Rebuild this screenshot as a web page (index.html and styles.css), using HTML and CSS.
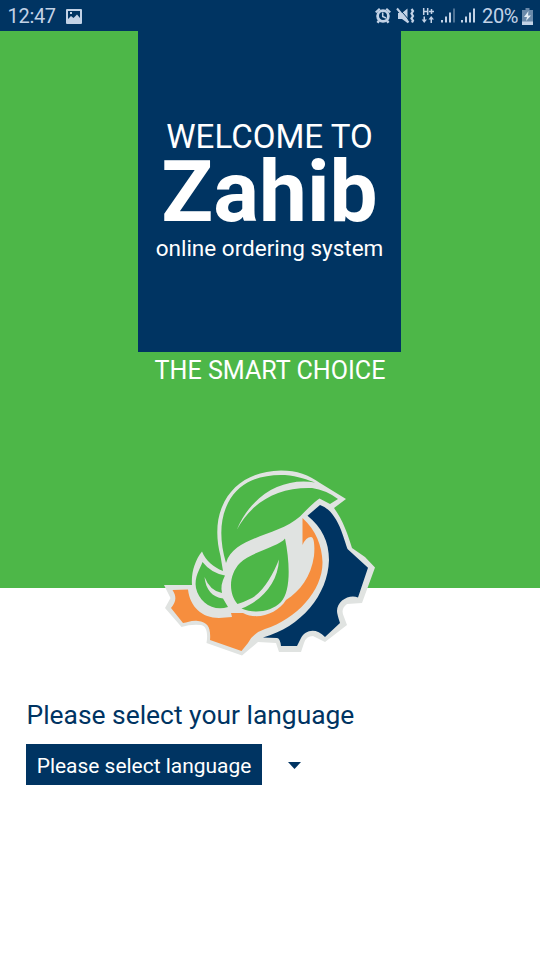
FILE: index.html
```
<!DOCTYPE html>
<html lang="en">
<head>
<meta charset="utf-8">
<title>Zahib</title>
<link rel="stylesheet" href="styles.css">
</head>
<body>
<header class="status">
  <span class="clock">12:47</span>
  <svg class="picture" width="16" height="15" viewBox="0 0 16 15"><path fill-rule="evenodd" d="M1 0H15Q16 0 16 1V14Q16 15 15 15H1Q0 15 0 14V1Q0 0 1 0ZM2 2V10L5 7L7.500 9L11 5.500L14 9V2ZM4 3H6V5H4Z"/></svg>
  <svg class="signals" width="103" height="18" viewBox="0 0 103 18">
    <circle cx="8" cy="9" r="5.400" fill="none" stroke="#c2d2e6" stroke-width="2.800"/>
    <path d="M0 4.700L4 1L5.500 2.500L1.500 6ZM16 4.700L12 1L10.500 2.500L14.500 6ZM3 13L5 14.500L3.500 16.500L1.500 15ZM13 13L11 14.500L12.500 16.500L14.500 15Z"/>
    <path d="M7.700 5.500V9.500L11 11" fill="none" stroke="#c2d2e6" stroke-width="1.500"/>
    <path d="M23 6H27L32.500 1.500V16L27 12H23Z"/>
    <path d="M24 1.500L34 13" stroke="#003462" stroke-width="1"/>
    <path d="M22 1.500L33.500 15.500" stroke="#c2d2e6" stroke-width="2"/>
    <path d="M36.500 2L38 4L36.500 6.500L38 9L36.500 11.500L38 13.500L37 15.500" fill="none" stroke="#c2d2e6" stroke-width="2.200"/>
    <path d="M48.700 1V8M52.700 1V8M48.700 4.500H52.700M54 4.500H59M56.500 2V7" fill="none" stroke="#c2d2e6" stroke-width="1.500"/>
    <path d="M48.500 9.500H50V12.500H52L49.200 16L46.700 12.500H48.500ZM55.500 16H57V12.500H59L56.200 9L53.500 12.500H55.500Z"/>
    <path d="M66 13H68V15.500H66ZM70 9.500H72V15.500H70ZM74 5.500H76V15.500H74ZM86 13H88V15.500H86ZM90 9.500H92V15.500H90ZM94 5.500H96V15.500H94ZM98 1.500H100V15.500H98Z"/>
    <path d="M78 1.500H80V15.500H78Z" opacity=".4"/>
  </svg>
  <span class="percent">20%</span>
  <svg class="battery" width="11" height="17" viewBox="0 0 11 17"><path d="M3.500 0H7.500V2H11V17H0V2H3.500Z" opacity=".55"/><path d="M0 13.500H11V17H0Z"/><path fill="#e4edf6" d="M6.500 3L2 9H5L4 13L9 7.500H6Z"/></svg>
</header>
<main>
  <section class="hero">
    <div class="panel">
      <p class="welcome">WELCOME TO</p>
      <h1>Zahib</h1>
      <p class="tagline">online ordering system</p>
    </div>
    <p class="slogan">THE SMART CHOICE</p>
    <svg class="logo" width="220" height="195" viewBox="160 465 220 195">
      <path fill="#e0e3e1" d="M164 585H192C191 573 195 560 202 551.500C206 561 213 567 223 571L220.500 556C216 539 216 521 222 507C231 485 252 471 281 470.500C297 470.500 309 475 320 483L346 499L334 508C343 520 348 535 352 548L365 557L375 567.500L362 603L347 604Q340 609 344 617L347 625L325 642L313 636Q306 636 304 643L301 652H279L276 643L258 642L242 655.500L206.500 643C208 634 207 626 201 625Q191 624 181.500 627L165 608L170.500 598Z"/>
      <path fill="#f68e3e" d="M302.500 518C316 530 322 546 322.500 562C323 590 297 619 265 629Q253 633 248 643L241.500 651L210 640C211 628 208 622 198 621C191 620 188 623 183 623L171 608C176 602 177 597 172.500 590L188 589.500C190 607 202 618 219 618L232 617L231 613H243C258 621 278 613 286 600C300 591 311 577 314 556C315 545 314 537 311 537Q306 537 302.500 545Z"/>
      <path fill="#003462" d="M307.500 515.700L320 505C329 508 336 517 341 530C344 538 346 545 347.500 549L368 567.700L358 597.500C349 594 337 601 337 611Q337 614 340 623L325 637C316 627 305 630 301 638L297 646H281Q280 638 277 638L263 637.500C301 627 328 595 329 560C329 542 322 527 307.500 515.700Z"/>
      <path fill="#4db748" d="M226 563C219 539 220 519 228 503C239 482 260 474 285 475C298 476 308 480 315 482.500C283 477 251 495 236.700 530C252 502 277 487 312 488Q326 490 338 499L330 504L319.500 498.500Q315 501 300 516.500C277 537 234 536 226 563Z"/>
      <path fill="#4db748" d="M285 538.500C280 546 251 552 240 563C229 574 228 593 237.500 604Q244 602 252 598C265 590 273 574 279 559.500C278 582 263 600 241.500 608.500C254 614 271 612 281 602C291 591 290 563 285 538.500Z"/>
      <path fill="#4db748" d="M202.500 562Q211 573 225 575.500Q220 585 222 593Q210 591 204.500 577C206 590 212 597 223 598.500L228 607C213 612 199 602 196 588C194 577 200 569 202.500 562Z"/>
    </svg>
  </section>
  <section class="language">
    <h2>Please select your language</h2>
    <div class="picker"><button>Please select language</button><svg width="13" height="7" viewBox="0 0 13 7"><path d="M0 0H13L6.500 7Z"/></svg></div>
  </section>
</main>
</body>
</html>
```
FILE: styles.css
```
* { box-sizing: border-box; }
body { margin: 0; height: 960px; background: #fff; font-family: Roboto, sans-serif; overflow: hidden; }
p, h1, h2 { margin: 0; font-weight: 400; white-space: nowrap; }
.status { height: 31px; background: #003462; color: #c2d2e6; fill: #c2d2e6; display: flex; align-items: center; padding: 1px 7px 0 7.5px; font-size: 20px; }
.clock { letter-spacing: -.3px; }
.picture { margin-left: 10px; }
.signals { margin-left: auto; }
.percent { margin-left: 4px; letter-spacing: -.4px; }
.battery { margin-left: 4px; }
.hero { height: 557px; background: #4db748; color: #fff; display: flex; flex-direction: column; align-items: center; }
.panel { width: 263px; height: 321px; flex-shrink: 0; margin-right: 1px; padding-top: 86px; background: #003462; display: flex; flex-direction: column; align-items: center; }
.welcome { font-size: 33.1px; line-height: 40px; }
h1 { font-size: 85.500px; line-height: 71px; font-weight: 700; }
.tagline { font-size: 22.500px; line-height: 28px; margin-top: 6px; }
.slogan { font-size: 25.1px; line-height: 36px; padding-top: 1px; }
.logo { margin-top: 76px; flex-shrink: 0; }
.language { padding: 112px 26px 0 26.5px; color: #003462; }
h2 { font-size: 26.4px; line-height: 30px; }
.picker { display: flex; align-items: center; gap: 25.5px; margin: 14px 0 0 -.5px; fill: #003462; }
.picker svg { margin-top: 2px; }
button { width: 236px; height: 41px; padding: 2px 0 0; border: 0; background: #003462; color: #fff; font: 20.950px Roboto, sans-serif; }
```
